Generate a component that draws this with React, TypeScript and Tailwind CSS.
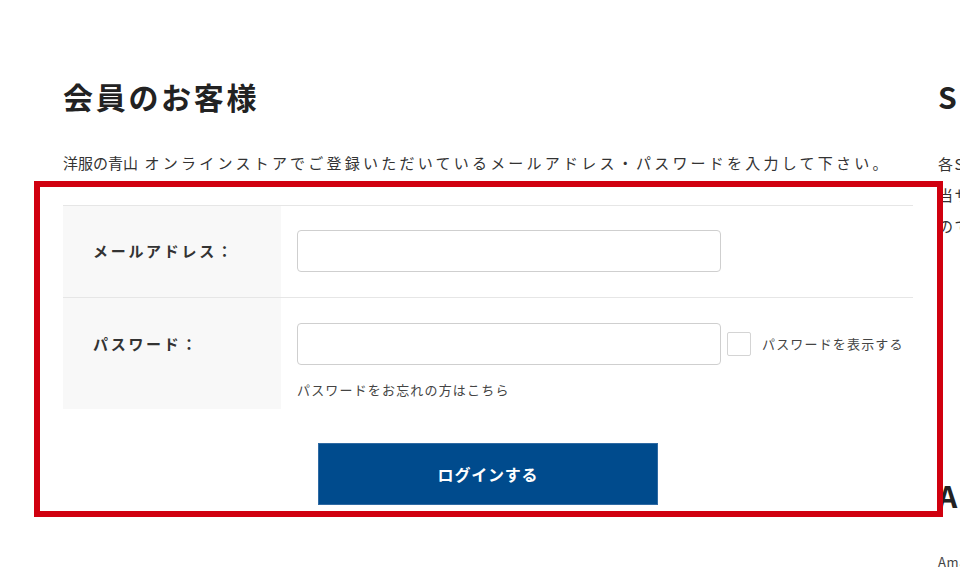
import React, { useState } from 'react';

const font = { fontFamily: '"Noto Sans CJK JP", "Noto Sans", sans-serif' };

const App: React.FC = () => {
  const [show, setShow] = useState(false);

  return (
    <div className="relative w-[960px] h-[570px] overflow-hidden bg-white text-[#333]" style={font}>
      <div className="flex gap-[25px] pl-[63px] pt-[74px]">
        {/* members login */}
        <div className="w-[850px] shrink-0">
          <h2 className="text-[30px] leading-[45px] font-bold tracking-[0.09em] text-[#222]">会員のお客様</h2>
          <p className="mt-[29px] text-[15px] leading-[30px] whitespace-nowrap">
            洋服の青山<span className="tracking-[0.215em]"> オンラインストアでご登録いただいているメールアドレス・パスワードを入力して下さい。</span>
          </p>

          <div className="mt-[27px] border-t border-[#e6e6e6]">
            <div className="flex border-b border-[#e6e6e6]">
              <div className="w-[218px] bg-[#f8f8f8] pl-[30px] pt-[24px]">
                <span className="block leading-[42px] text-[15px] font-bold tracking-[0.18em] text-[#333]">メールアドレス：</span>
              </div>
              <div className="flex-1 pl-[16px] pt-[24px] pb-[25px]">
                <input type="email" className="block w-[424px] h-[42px] rounded-[4px] border border-[#cfcfcf] bg-white px-3 outline-none" />
              </div>
            </div>
            <div className="flex">
              <div className="w-[218px] bg-[#f8f8f8] pl-[30px] pt-[25px]">
                <span className="block leading-[42px] text-[15px] font-bold tracking-[0.18em] text-[#333]">パスワード：</span>
              </div>
              <div className="flex-1 pl-[16px] pt-[25px] pb-[10px]">
                <div className="flex items-center">
                  <input type={show ? 'text' : 'password'} className="block w-[424px] h-[42px] rounded-[4px] border border-[#cfcfcf] bg-white px-3 outline-none" />
                  <label className="ml-[6px] flex items-center cursor-pointer">
                    <span
                      onClick={() => setShow(!show)}
                      className="block w-[24px] h-[24px] rounded-[2px] border border-[#d4d4d4] bg-white"
                    />
                    <span className="ml-[11px] text-[13px] tracking-[0.09em] text-[#444]">パスワードを表示する</span>
                  </label>
                </div>
                <a className="mt-[16px] block text-[13px] leading-[18px] tracking-[0.09em] text-[#444]">パスワードをお忘れの方はこちら</a>
              </div>
            </div>
          </div>

          <div className="mt-[34px] flex justify-center">
            <button className="w-[340px] h-[62px] bg-[#004b8d] border border-[#2f6aa3] text-white text-[16px] font-bold tracking-[0.05em]">ログインする</button>
          </div>
        </div>

        {/* sns login (cut off at the right edge) */}
        <div className="w-[420px] shrink-0">
          <h2 className="text-[30px] leading-[45px] font-bold tracking-[0.07em] text-[#222] whitespace-nowrap">SNSアカウントでログイン</h2>
          <p className="mt-[29px] text-[15px] leading-[31px] tracking-[0.1em] whitespace-nowrap">
            各SNSのアカウントでログインいただけます。<br />
            当サイトにSNSアカウントを連携していただく<br />
            のでご注意ください。
          </p>
          <div className="h-[232px]" />
          <h2 className="text-[30px] leading-[45px] font-bold tracking-[0.15em] text-[#222] whitespace-nowrap">Amazonアカウントでログイン</h2>
          <p className="mt-[34px] text-[13px] tracking-[0.05em] text-[#444] whitespace-nowrap">Amazonアカウントをお持ちのお客様</p>
        </div>
      </div>

      {/* highlight frame */}
      <div className="pointer-events-none absolute left-[34px] top-[181px] w-[909px] h-[336px] border-[6px] border-[#d0000f]" />
    </div>
  );
};

export default App;
